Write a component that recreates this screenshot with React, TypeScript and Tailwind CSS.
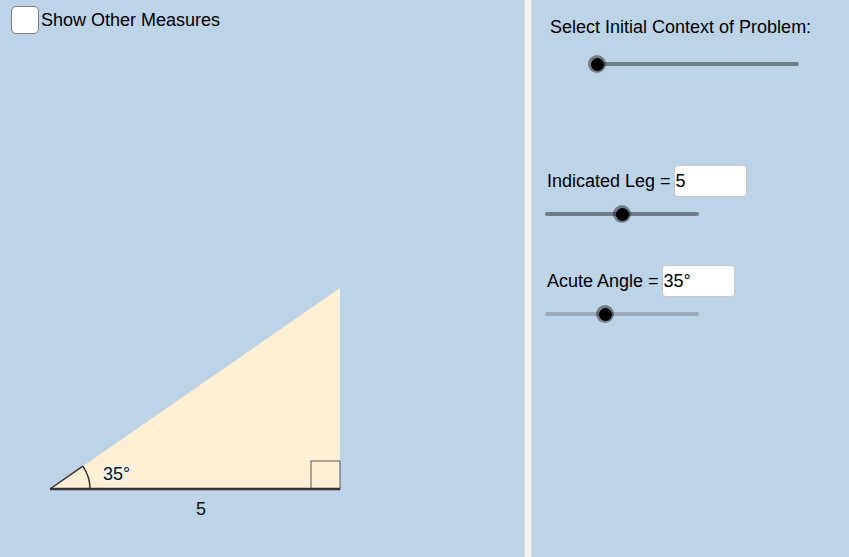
function Slider({ width, pos, track }: { width: number; pos: number; track: string }) {
  return (
    <div className="relative flex h-[20px] items-center" style={{ width }}>
      <div className={`h-[4px] w-full rounded-full ${track}`} />
      <div
        className="absolute top-1/2 flex h-[18px] w-[18px] -translate-x-1/2 -translate-y-1/2 items-center justify-center rounded-full bg-[#000000]/40"
        style={{ left: pos }}
      >
        <div className="h-[13px] w-[13px] rounded-full bg-black" />
      </div>
    </div>
  );
}

function InputRow({ label, value }: { label: string; value: string }) {
  return (
    <div className="flex h-[32px] items-center">
      <span className="mr-[3px]">{label}</span>
      <div className="flex h-[32px] w-[73px] items-center rounded-[4px] border border-[#c8c8c8] bg-white pl-[1px]">
        {value}
      </div>
    </div>
  );
}

export default function App() {
  return (
    <div className="flex h-[557px] w-[849px] overflow-hidden bg-[#bdd3e7] text-[18px] text-black [font-family:'Liberation_Sans',Arial,sans-serif]">
      <div className="relative w-[524px] shrink-0">
        <svg className="absolute inset-0" width="524" height="557" viewBox="0 0 524 557">
          <polygon points="50,489 340,489 340,288" fill="#ffefd5" />
          <rect x="311" y="461" width="29" height="28" fill="none" stroke="#555" strokeWidth="1" />
          <line x1="50" y1="489" x2="82.8" y2="466.1" stroke="#333" strokeWidth="1.5" />
          <path d="M 82.8 466.1 A 40 40 0 0 1 90 489" fill="none" stroke="#333" strokeWidth="1.5" />
          <line x1="50" y1="489" x2="340" y2="489" stroke="#333" strokeWidth="2.5" />
          <text
            x="103"
            y="480"
            fontSize="18"
            fontFamily="'Liberation Sans', Arial, sans-serif"
            fill="#111"
            stroke="#eef4fa"
            strokeWidth="2.5"
            paintOrder="stroke"
          >
            35°
          </text>
          <text x="196" y="515" fontSize="18" fontFamily="'Liberation Sans', Arial, sans-serif" fill="#111">
            5
          </text>
        </svg>
        <div className="relative flex items-center pl-[11px] pt-[5px]">
          <div className="h-[28px] w-[28px] rounded-[5px] border border-[#7d7d7d] bg-white" />
          <span className="ml-[2px] pt-[2px]">Show Other Measures</span>
        </div>
      </div>
      <div className="w-[8px] shrink-0 border-x border-[#dadada] bg-[#f3f3f3]" />
      <div className="flex-1 pt-[16px]">
        <div className="h-[22px] pl-[18px] leading-[22px]">Select Initial Context of Problem:</div>
        <div className="mt-[16px] pl-[65px]">
          <Slider width={202} pos={0} track="bg-[#6e7c87]" />
        </div>
        <div className="mt-[91px] pl-[15px]">
          <InputRow label="Indicated Leg =" value="5" />
        </div>
        <div className="mt-[7px] pl-[13px]">
          <Slider width={154} pos={77} track="bg-[#6e7c87]" />
        </div>
        <div className="mt-[41px] pl-[15px]">
          <InputRow label="Acute Angle =" value="35°" />
        </div>
        <div className="mt-[7px] pl-[13px]">
          <Slider width={154} pos={60} track="bg-[#9aabba]" />
        </div>
      </div>
    </div>
  );
}
